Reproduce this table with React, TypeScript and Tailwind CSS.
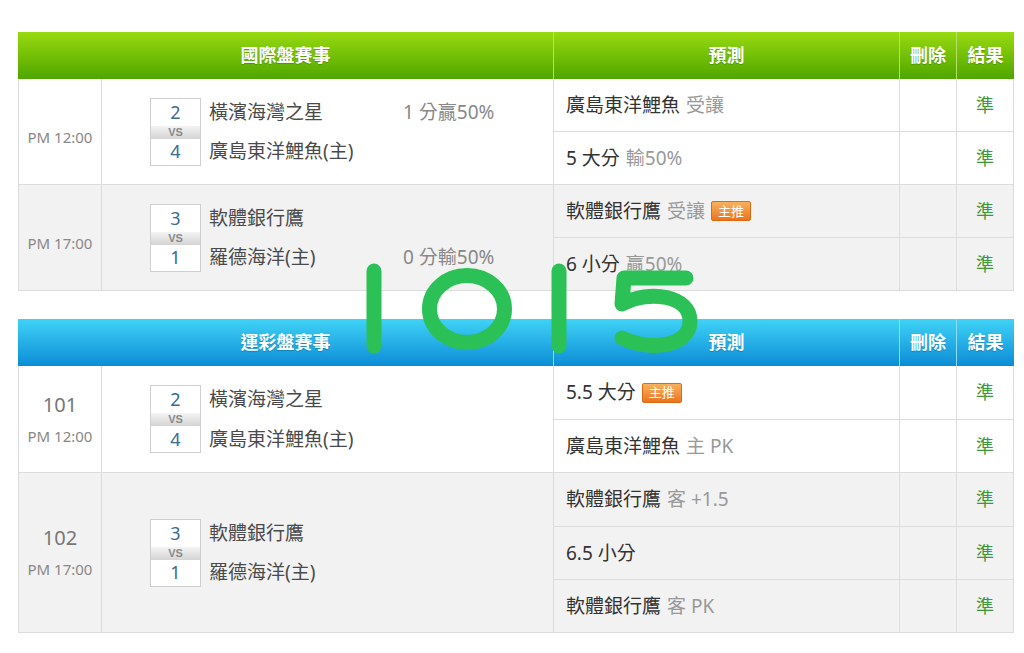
import React from 'react';

type Team = { score: number; name: string };
type Pred = { main: string; sub?: string; badge?: boolean };
type Game = {
  no?: string;
  time: string;
  home: Team;
  away: Team;
  handicap?: { text: string; row: 0 | 1 };
  preds: Pred[];
  gray?: boolean;
};

const intlGames: Game[] = [
  {
    time: 'PM 12:00',
    home: { score: 2, name: '橫濱海灣之星' },
    away: { score: 4, name: '廣島東洋鯉魚(主)' },
    handicap: { text: '1 分贏50%', row: 0 },
    preds: [
      { main: '廣島東洋鯉魚', sub: '受讓' },
      { main: '5 大分', sub: '輸50%' },
    ],
  },
  {
    time: 'PM 17:00',
    home: { score: 3, name: '軟體銀行鷹' },
    away: { score: 1, name: '羅德海洋(主)' },
    handicap: { text: '0 分輸50%', row: 1 },
    preds: [
      { main: '軟體銀行鷹', sub: '受讓', badge: true },
      { main: '6 小分', sub: '贏50%' },
    ],
    gray: true,
  },
];

const sportGames: Game[] = [
  {
    no: '101',
    time: 'PM 12:00',
    home: { score: 2, name: '橫濱海灣之星' },
    away: { score: 4, name: '廣島東洋鯉魚(主)' },
    preds: [
      { main: '5.5 大分', badge: true },
      { main: '廣島東洋鯉魚', sub: '主 PK' },
    ],
  },
  {
    no: '102',
    time: 'PM 17:00',
    home: { score: 3, name: '軟體銀行鷹' },
    away: { score: 1, name: '羅德海洋(主)' },
    preds: [
      { main: '軟體銀行鷹', sub: '客 +1.5' },
      { main: '6.5 小分' },
      { main: '軟體銀行鷹', sub: '客 PK' },
    ],
    gray: true,
  },
];

function Badge() {
  return (
    <span className="ml-1.5 inline-flex h-[20px] items-center rounded-[2px] border border-[#dc6a14] bg-gradient-to-b from-[#f9b15e] to-[#ea7418] px-[6px] text-[13px] leading-none text-white">
      主推
    </span>
  );
}

function ScoreBox({ game }: { game: Game }) {
  const hc = game.handicap;
  return (
    <div className="flex items-center">
      <div className="flex w-[51px] flex-col border border-[#cfcfcf] bg-white">
        <div className="flex h-[27px] items-center justify-center text-[18px] text-[#3b6b8e]">
          {game.home.score}
        </div>
        <div className="flex h-[13px] items-center justify-center bg-gradient-to-b from-[#f4f4f4] to-[#d4d4d4] font-['Liberation_Sans',sans-serif] text-[11px] font-bold leading-none text-[#8a8a8a]">
          VS
        </div>
        <div className="flex h-[26px] items-center justify-center text-[18px] text-[#3b6b8e]">
          {game.away.score}
        </div>
      </div>
      <div className="ml-2 flex w-[194px] flex-col text-[19px] text-[#4a4a4a]">
        <div className="flex h-[27px] items-center">{game.home.name}</div>
        <div className="h-[13px]" />
        <div className="flex h-[26px] items-center">{game.away.name}</div>
      </div>
      <div className="flex w-[120px] flex-col text-[19px] text-[#888]">
        <div className="flex h-[27px] items-center">{hc && hc.row === 0 ? hc.text : ''}</div>
        <div className="h-[13px]" />
        <div className="flex h-[26px] items-center">{hc && hc.row === 1 ? hc.text : ''}</div>
      </div>
    </div>
  );
}

function GameRow({ game, heights }: { game: Game; heights: number[] }) {
  return (
    <div className={`flex border-b border-[#dcdcdc] ${game.gray ? 'bg-[#f2f2f2]' : 'bg-white'}`}>
      <div className="flex w-[84px] shrink-0 flex-col items-center justify-center border-l border-r border-[#dcdcdc] text-[#888]">
        {game.no ? (
          <>
            <span className="text-[20px] leading-none text-[#777]">{game.no}</span>
            <span className="mt-[14px] text-[15px] leading-none">{game.time}</span>
          </>
        ) : (
          <span className="pt-3 text-[15px] leading-none">{game.time}</span>
        )}
      </div>
      <div className="flex w-[452px] shrink-0 items-center border-r border-[#dcdcdc] pl-[48px]">
        <ScoreBox game={game} />
      </div>
      <div className="flex flex-col">
        {game.preds.map((p, i) => (
          <div
            key={i}
            className={`flex ${i < game.preds.length - 1 ? 'border-b border-[#dcdcdc]' : ''}`}
            style={{ height: heights[i] }}
          >
            <div className="flex w-[346px] items-center border-r border-[#dcdcdc] pl-3 text-[19px] text-[#333]">
              {p.main}
              {p.sub && <span className="ml-1.5 text-[#999]">{p.sub}</span>}
              {p.badge && <Badge />}
            </div>
            <div className="w-[57px] border-r border-[#dcdcdc]" />
            <div className="flex w-[57px] items-center justify-center border-r border-[#dcdcdc] text-[18px] text-[#3c9a3c]">準</div>
          </div>
        ))}
      </div>
    </div>
  );
}

function GameTable({ title, tone, games, heights }: { title: string; tone: 'green' | 'blue'; games: Game[]; heights: number[][] }) {
  const head =
    tone === 'green'
      ? 'bg-gradient-to-b from-[#98da10] to-[#4ea600]'
      : 'bg-gradient-to-b from-[#3fd3f6] to-[#0a8cd6]';
  const line = tone === 'green' ? 'border-[#b5e06a]' : 'border-[#8fdcf5]';
  return (
    <div className="w-[996px]">
      <div className={`flex h-[47px] text-[18px] font-bold text-white [text-shadow:0_1px_1px_rgba(0,0,0,0.2)] ${head}`}>
        <div className={`flex w-[536px] items-center justify-center border-r ${line}`}>{title}</div>
        <div className={`flex w-[346px] items-center justify-center border-r ${line}`}>預測</div>
        <div className={`flex w-[57px] items-center justify-center border-r ${line}`}>刪除</div>
        <div className="flex w-[57px] items-center justify-center">結果</div>
      </div>
      <div>
        {games.map((g, i) => (
          <GameRow key={i} game={g} heights={heights[i]} />
        ))}
      </div>
    </div>
  );
}

function Stamp() {
  return (
    <svg
      className="pointer-events-none absolute left-0 top-0"
      width="1024"
      height="653"
      viewBox="0 0 1024 653"
      fill="none"
      stroke="#2cc156"
      strokeWidth="15"
      strokeLinecap="round"
      strokeLinejoin="round"
    >
      <path d="M374 271 L374 346" />
      <ellipse cx="467" cy="309" rx="37.5" ry="33.5" />
      <path d="M559 271 L559 346" />
      <path d="M686 278 L624 278 L622 304 C650 289 690 296 690 321 C690 346 652 352 622 338" />
    </svg>
  );
}

export default function App() {
  return (
    <div className="relative h-[653px] w-[1024px] overflow-hidden bg-white font-['Noto_Sans','Noto_Sans_CJK_TC',sans-serif]">
      <div className="flex flex-col gap-[28px] pl-[18px] pt-[32px]">
        <GameTable title="國際盤賽事" tone="green" games={intlGames} heights={[[53, 52], [53, 52]]} />
        <GameTable title="運彩盤賽事" tone="blue" games={sportGames} heights={[[54, 52], [54, 53, 52]]} />
      </div>
      <Stamp />
    </div>
  );
}
